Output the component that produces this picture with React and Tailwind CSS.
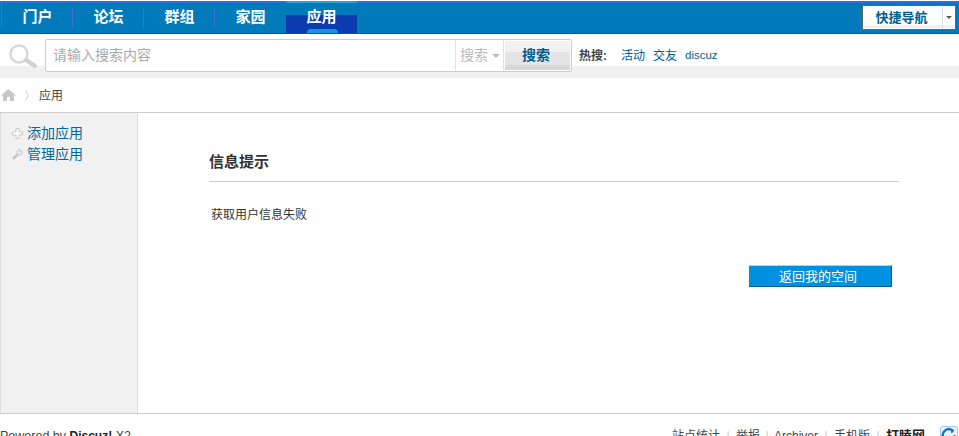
const font = { fontFamily: '"Liberation Sans", "Noto Sans CJK SC", sans-serif' };

const navItems = ["门户", "论坛", "群组", "家园", "应用"];

function NavTab({ label, index }) {
  const active = index === 4;
  return (
    <div className="relative w-[71px] h-[25px] flex justify-center text-[15px] font-bold text-white">
      {active && <div className="absolute bottom-0 left-0 right-0 h-[18px] bg-[#0a3cb0]" />}
      {active && <div className="absolute bottom-0 left-[21px] w-[31px] h-[4px] rounded-t-full bg-[#1596d8]" />}
      {index < 3 && <div className="absolute right-0 top-0 w-[1px] h-[20px] bg-[#3b72d8]" />}
      <span className="relative top-[-1px] leading-[20px]">{label}</span>
    </div>
  );
}

function FooterSep({ className = "mx-[6px]" }) {
  return <span className={`w-[4px] text-center text-[#ccc] ${className}`}>|</span>;
}

export default function App() {
  return (
    <div style={font} className="w-[959px] h-[436px] overflow-hidden bg-white text-[#333]">
      {/* Top nav */}
      <header className="h-[34px] bg-[#007ab8] border-t border-white border-b-[1px] border-b-[#00608f] relative">
        <div className="flex h-[2px]">
          <div className="w-[286px] bg-[#2a6fe0]" />
          <div className="w-[71px] bg-[#2aa0d8]" />
          <div className="flex-1 bg-[#2a6fe0]" />
        </div>
        <div className="flex pl-[2px] pt-[5px]">
          {navItems.map((label, i) => (
            <NavTab key={label} label={label} index={i} />
          ))}
        </div>
        <div className="absolute left-[1px] top-[1px] w-[1px] h-[26px] bg-[#3b72d8]" />
        <div className="absolute left-[862px] top-[4px] w-[94px] h-[25px] bg-[linear-gradient(#fff_19px,#f0f0f0_19px,#f0f0f0_22px,#fff_22px)] border border-[#666] flex">
          <div className="w-[80px] pr-[2px] flex items-center justify-center text-[13px] font-bold text-[#005f8f] border-r border-[#d5dcec]">
            快捷导航
          </div>
          <div className="flex-1 flex items-center justify-center">
            <div className="w-0 h-0 border-x-[3px] border-x-transparent border-t-[3px] border-t-[#555]" />
          </div>
        </div>
      </header>

      {/* Search row */}
      <div className="h-[44px] bg-[linear-gradient(#fff_32px,#f1f1f1_32px)] flex items-start pt-[5px]">
        <svg className="ml-[8px] mt-[4px] shrink-0" width="30" height="26" viewBox="0 0 30 26" fill="none">
          <circle cx="11" cy="11" r="8.5" stroke="#d8d8d8" strokeWidth="2.5" />
          <path d="M18 17l9 6" stroke="#cfcfcf" strokeWidth="4" strokeLinecap="round" />
        </svg>
        <div className="ml-[7px] w-[527px] h-[33px] flex bg-white border border-[#ccc] rounded-[2px]">
          <div className="w-[409px] flex items-center pl-[7px] text-[14px] text-[#aaa]">请输入搜索内容</div>
          <div className="w-[49px] flex items-center pl-[4px] gap-[4px] text-[14px] text-[#bbb] border-l border-[#e2e2e2] border-r">
            搜索
            <div className="w-0 h-0 border-x-[4px] border-x-transparent border-t-[4px] border-t-[#bbb]" />
          </div>
          <div className="flex-1 m-[1px] pr-[3px] flex items-center justify-center text-[14px] font-bold text-[#005f8f] bg-[linear-gradient(#f1f1f1_11px,#e4e4e4_11px,#e4e4e4_24px,#d8d8d8_24px)]">
            搜索
          </div>
        </div>
        <div className="ml-[7px] flex items-center h-[33px] text-[12px] text-[#005f8f]">
          <b className="text-[#444] w-[42px]">热搜:</b>
          <span className="w-[32px]">活动</span>
          <span className="w-[32px]">交友</span>
          <span className="text-[11.5px]">discuz</span>
        </div>
      </div>

      {/* Breadcrumb */}
      <div className="h-[35px] border-b border-[#ccc] flex items-center text-[12px] text-[#444]">
        <svg className="ml-[1px]" width="15" height="12" viewBox="0 0 15 12" fill="#c8c8c8">
          <path d="M7.5 0L15 6.5h-2V12H9V8H6v4H2V6.5H0z" />
        </svg>
        <svg className="ml-[9px]" width="4" height="11" viewBox="0 0 4 11" fill="none" stroke="#ccc">
          <path d="M0.5 0.5l3 5-3 5" />
        </svg>
        <span className="ml-[10px] relative top-[1px]">应用</span>
      </div>

      {/* Body */}
      <div className="h-[300px] flex">
        <aside className="w-[138px] bg-[#f1f1f1] border-l border-r border-[#ddd] pt-[10px] pl-[11px] text-[14px] leading-[21px] text-[#006a9c]">
          <div className="flex items-center gap-[4px]">
            <svg width="11" height="11" viewBox="0 0 11 11" fill="#fff" stroke="#c8c8c8">
              <path d="M4 .5h3V4h3.500v3H7v3.500H4V7H.5V4H4z" />
            </svg>
            添加应用
          </div>
          <div className="flex items-center gap-[4px]">
            <svg width="11" height="11" viewBox="0 0 11 11" fill="none" stroke="#c8c8c8" strokeWidth="1.500">
              <path d="M1 10l5-5" strokeWidth="2.500" />
              <path d="M6 5a2.500 2.500 0 0 1 3-4L7.500 2.500 8.500 3.500 10 2a2.500 2.500 0 0 1-4 3z" strokeWidth="1" />
            </svg>
            管理应用
          </div>
        </aside>
        <main className="flex-1 pl-[71px] pr-[60px] pt-[39px]">
          <h3 className="h-[30px] border-b border-[#ccc] text-[15px] font-bold leading-[20px] text-[#333]">信息提示</h3>
          <p className="mt-[25px] ml-[2px] text-[12px] leading-[16px] text-[#333]">获取用户信息失败</p>
          <div className="mt-[42px] flex justify-end pr-[7px]">
            <div className="w-[143px] h-[22px] pr-[4px] pt-[2px] flex items-center justify-center bg-[#0090e0] border-t border-t-[#ccc] border-r border-r-[#005f8f] border-b border-b-[#005f8f] text-[13px] text-white">
              返回我的空间
            </div>
          </div>
        </main>
      </div>

      {/* Footer */}
      <footer className="border-t border-[#ccc] pt-[14px] flex justify-between text-[12px] leading-[16px] text-[#444]">
        <div className="text-[12.5px]">
          Powered by <b className="text-[12px] text-[#222]">Discuz!</b> X2
        </div>
        <div className="flex items-center pr-[1px]">
          <span>站点统计</span>
          <FooterSep />
          <span>举报</span>
          <FooterSep className="mx-[5px]" />
          <span>Archiver</span>
          <FooterSep />
          <span>手机版</span>
          <FooterSep />
          <b className="text-[13px] text-[#222]">打瞌网</b>
          <svg className="ml-[15px] mt-[-3px]" width="18" height="18" viewBox="0 0 18 18" fill="none">
            <rect x="0.5" y="0.5" width="17" height="17" rx="2" fill="#e8f2fb" stroke="#a8c8e8" />
            <path d="M3.500 12a6 6 0 0 1 9-7.500" stroke="#1a70c0" strokeWidth="2.500" />
            <path d="M10.500 2.500l4 2-3 3z" fill="#1a70c0" />
            <path d="M14.500 9a5 5 0 0 1-7 5" stroke="#e05050" strokeWidth="2" />
          </svg>
        </div>
      </footer>
    </div>
  );
}
